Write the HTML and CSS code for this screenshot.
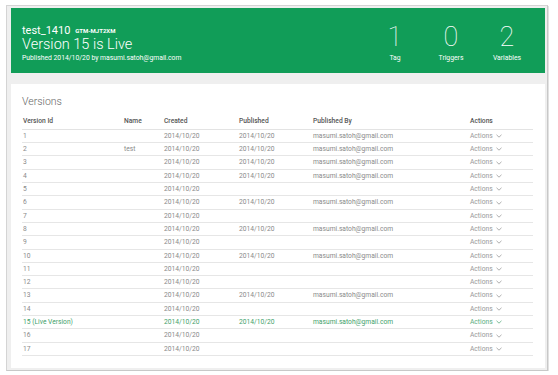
FILE: index.html
```html
<!DOCTYPE html>
<html>
<head>
<meta charset="utf-8">
<link rel="stylesheet" href="styles.css">
</head>
<body>
<div class="frame">
  <div class="banner">
    <div class="info">
      <div class="line1">test_1410 <span class="gtm">GTM-MJT2XM</span></div>
      <div class="line2">Version 15 is Live</div>
      <div class="line3">Published 2014/10/20 by masumi.satoh@gmail.com</div>
    </div>
    <div class="stats">
      <div class="stat"><div class="num">1</div><div class="lbl">Tag</div></div>
      <div class="stat"><div class="num">0</div><div class="lbl">Triggers</div></div>
      <div class="stat"><div class="num">2</div><div class="lbl">Variables</div></div>
    </div>
  </div>
  <div class="card">
    <div class="title">Versions</div>
    <div class="table">
      <div class="row head"><div>Version Id</div><div>Name</div><div>Created</div><div>Published</div><div>Published By</div><div>Actions</div></div>
      <div class="row"><div>1</div><div></div><div>2014/10/20</div><div>2014/10/20</div><div>masumi.satoh@gmail.com</div><div class="act">Actions<svg width="6" height="4" viewBox="0 0 6 4"><polyline points="0.5,0.8 3,3.2 5.5,0.8" fill="none" stroke="currentColor" stroke-width="0.8"/></svg></div></div>
      <div class="row"><div>2</div><div>test</div><div>2014/10/20</div><div>2014/10/20</div><div>masumi.satoh@gmail.com</div><div class="act">Actions<svg width="6" height="4" viewBox="0 0 6 4"><polyline points="0.5,0.8 3,3.2 5.5,0.8" fill="none" stroke="currentColor" stroke-width="0.8"/></svg></div></div>
      <div class="row"><div>3</div><div></div><div>2014/10/20</div><div>2014/10/20</div><div>masumi.satoh@gmail.com</div><div class="act">Actions<svg width="6" height="4" viewBox="0 0 6 4"><polyline points="0.5,0.8 3,3.2 5.5,0.8" fill="none" stroke="currentColor" stroke-width="0.8"/></svg></div></div>
      <div class="row"><div>4</div><div></div><div>2014/10/20</div><div>2014/10/20</div><div>masumi.satoh@gmail.com</div><div class="act">Actions<svg width="6" height="4" viewBox="0 0 6 4"><polyline points="0.5,0.8 3,3.2 5.5,0.8" fill="none" stroke="currentColor" stroke-width="0.8"/></svg></div></div>
      <div class="row"><div>5</div><div></div><div>2014/10/20</div><div></div><div></div><div class="act">Actions<svg width="6" height="4" viewBox="0 0 6 4"><polyline points="0.5,0.8 3,3.2 5.5,0.8" fill="none" stroke="currentColor" stroke-width="0.8"/></svg></div></div>
      <div class="row"><div>6</div><div></div><div>2014/10/20</div><div>2014/10/20</div><div>masumi.satoh@gmail.com</div><div class="act">Actions<svg width="6" height="4" viewBox="0 0 6 4"><polyline points="0.5,0.8 3,3.2 5.5,0.8" fill="none" stroke="currentColor" stroke-width="0.8"/></svg></div></div>
      <div class="row"><div>7</div><div></div><div>2014/10/20</div><div></div><div></div><div class="act">Actions<svg width="6" height="4" viewBox="0 0 6 4"><polyline points="0.5,0.8 3,3.2 5.5,0.8" fill="none" stroke="currentColor" stroke-width="0.8"/></svg></div></div>
      <div class="row"><div>8</div><div></div><div>2014/10/20</div><div>2014/10/20</div><div>masumi.satoh@gmail.com</div><div class="act">Actions<svg width="6" height="4" viewBox="0 0 6 4"><polyline points="0.5,0.8 3,3.2 5.5,0.8" fill="none" stroke="currentColor" stroke-width="0.8"/></svg></div></div>
      <div class="row"><div>9</div><div></div><div>2014/10/20</div><div></div><div></div><div class="act">Actions<svg width="6" height="4" viewBox="0 0 6 4"><polyline points="0.5,0.8 3,3.2 5.5,0.8" fill="none" stroke="currentColor" stroke-width="0.8"/></svg></div></div>
      <div class="row"><div>10</div><div></div><div>2014/10/20</div><div>2014/10/20</div><div>masumi.satoh@gmail.com</div><div class="act">Actions<svg width="6" height="4" viewBox="0 0 6 4"><polyline points="0.5,0.8 3,3.2 5.5,0.8" fill="none" stroke="currentColor" stroke-width="0.8"/></svg></div></div>
      <div class="row"><div>11</div><div></div><div>2014/10/20</div><div></div><div></div><div class="act">Actions<svg width="6" height="4" viewBox="0 0 6 4"><polyline points="0.5,0.8 3,3.2 5.5,0.8" fill="none" stroke="currentColor" stroke-width="0.8"/></svg></div></div>
      <div class="row"><div>12</div><div></div><div>2014/10/20</div><div></div><div></div><div class="act">Actions<svg width="6" height="4" viewBox="0 0 6 4"><polyline points="0.5,0.8 3,3.2 5.5,0.8" fill="none" stroke="currentColor" stroke-width="0.8"/></svg></div></div>
      <div class="row"><div>13</div><div></div><div>2014/10/20</div><div>2014/10/20</div><div>masumi.satoh@gmail.com</div><div class="act">Actions<svg width="6" height="4" viewBox="0 0 6 4"><polyline points="0.5,0.8 3,3.2 5.5,0.8" fill="none" stroke="currentColor" stroke-width="0.8"/></svg></div></div>
      <div class="row"><div>14</div><div></div><div>2014/10/20</div><div></div><div></div><div class="act">Actions<svg width="6" height="4" viewBox="0 0 6 4"><polyline points="0.5,0.8 3,3.2 5.5,0.8" fill="none" stroke="currentColor" stroke-width="0.8"/></svg></div></div>
      <div class="row live"><div>15 (Live Version)</div><div></div><div>2014/10/20</div><div>2014/10/20</div><div>masumi.satoh@gmail.com</div><div class="act">Actions<svg width="6" height="4" viewBox="0 0 6 4"><polyline points="0.5,0.8 3,3.2 5.5,0.8" fill="none" stroke="currentColor" stroke-width="0.8"/></svg></div></div>
      <div class="row"><div>16</div><div></div><div>2014/10/20</div><div></div><div></div><div class="act">Actions<svg width="6" height="4" viewBox="0 0 6 4"><polyline points="0.5,0.8 3,3.2 5.5,0.8" fill="none" stroke="currentColor" stroke-width="0.8"/></svg></div></div>
      <div class="row"><div>17</div><div></div><div>2014/10/20</div><div></div><div></div><div class="act">Actions<svg width="6" height="4" viewBox="0 0 6 4"><polyline points="0.5,0.8 3,3.2 5.5,0.8" fill="none" stroke="currentColor" stroke-width="0.8"/></svg></div></div>
    </div>
  </div>
</div>
</body>
</html>
```
FILE: styles.css
```css
html, body {
  margin: 0;
  padding: 0;
  background: #ffffff;
}
body {
  font-family: Roboto, "Liberation Sans", sans-serif;
}
.frame {
  box-sizing: border-box;
  margin: 5px 0 0 6px;
  width: 542px;
  height: 366px;
  border: 1px solid #d4d4d4;
  border-right-color: #c8c8c8;
  border-bottom-color: #c8c8c8;
  box-shadow: 1px 1px 0 #e2e2e2;
  background: #efefef;
  padding: 2px 2px 2px 4px;
  display: flex;
  flex-direction: column;
  gap: 11px;
}
.banner {
  background: #119d58;
  color: #ffffff;
  height: 65px;
  box-sizing: border-box;
  padding: 15px 10px 0 11px;
  display: flex;
  justify-content: space-between;
  align-items: flex-start;
}
.info {
  padding-top: 0.5px;
}
.line1 {
  font-size: 11px;
  line-height: 13px;
}
.gtm {
  font-size: 6px;
  font-weight: 700;
  margin-left: 2px;
  vertical-align: 1px;
}
.line2 {
  font-size: 14.5px;
  line-height: 16px;
  font-weight: 300;
}
.line3 {
  margin-top: 1.4px;
  font-size: 6.8px;
  line-height: 9px;
}
.stats {
  display: flex;
}
.stat {
  width: 56px;
  text-align: center;
}
.num {
  font-size: 27px;
  line-height: 28px;
  font-weight: 100;
}
.lbl {
  margin-top: 3.4px;
  font-size: 6.8px;
  line-height: 9px;
}
.card {
  background: #ffffff;
  flex: 1;
  padding: 12px 12px 0 11px;
}
.title {
  font-size: 10.5px;
  line-height: 12px;
  font-weight: 300;
  color: #666666;
}
.table {
  margin-top: 9.4px;
}
.row {
  display: grid;
  grid-template-columns: 101px 40px 75px 74px 157px 1fr;
  box-sizing: border-box;
  height: 13.31px;
  line-height: 12.31px;
  border-bottom: 1px solid #e6e6e6;
  font-size: 6.7px;
  color: #8a8a8a;
}
.row > div {
  padding-left: 1px;
  white-space: nowrap;
}
.row.head {
  height: 12.5px;
  line-height: 9px;
  padding-bottom: 2.5px;
  font-weight: 500;
  color: #555555;
  border-bottom-color: #e3e3e3;
}
.row.live {
  color: #3f9f6b;
}
.act {
  display: flex;
  align-items: center;
  gap: 3px;
  color: #999999;
}
.live .act {
  color: #5aad80;
}
```
